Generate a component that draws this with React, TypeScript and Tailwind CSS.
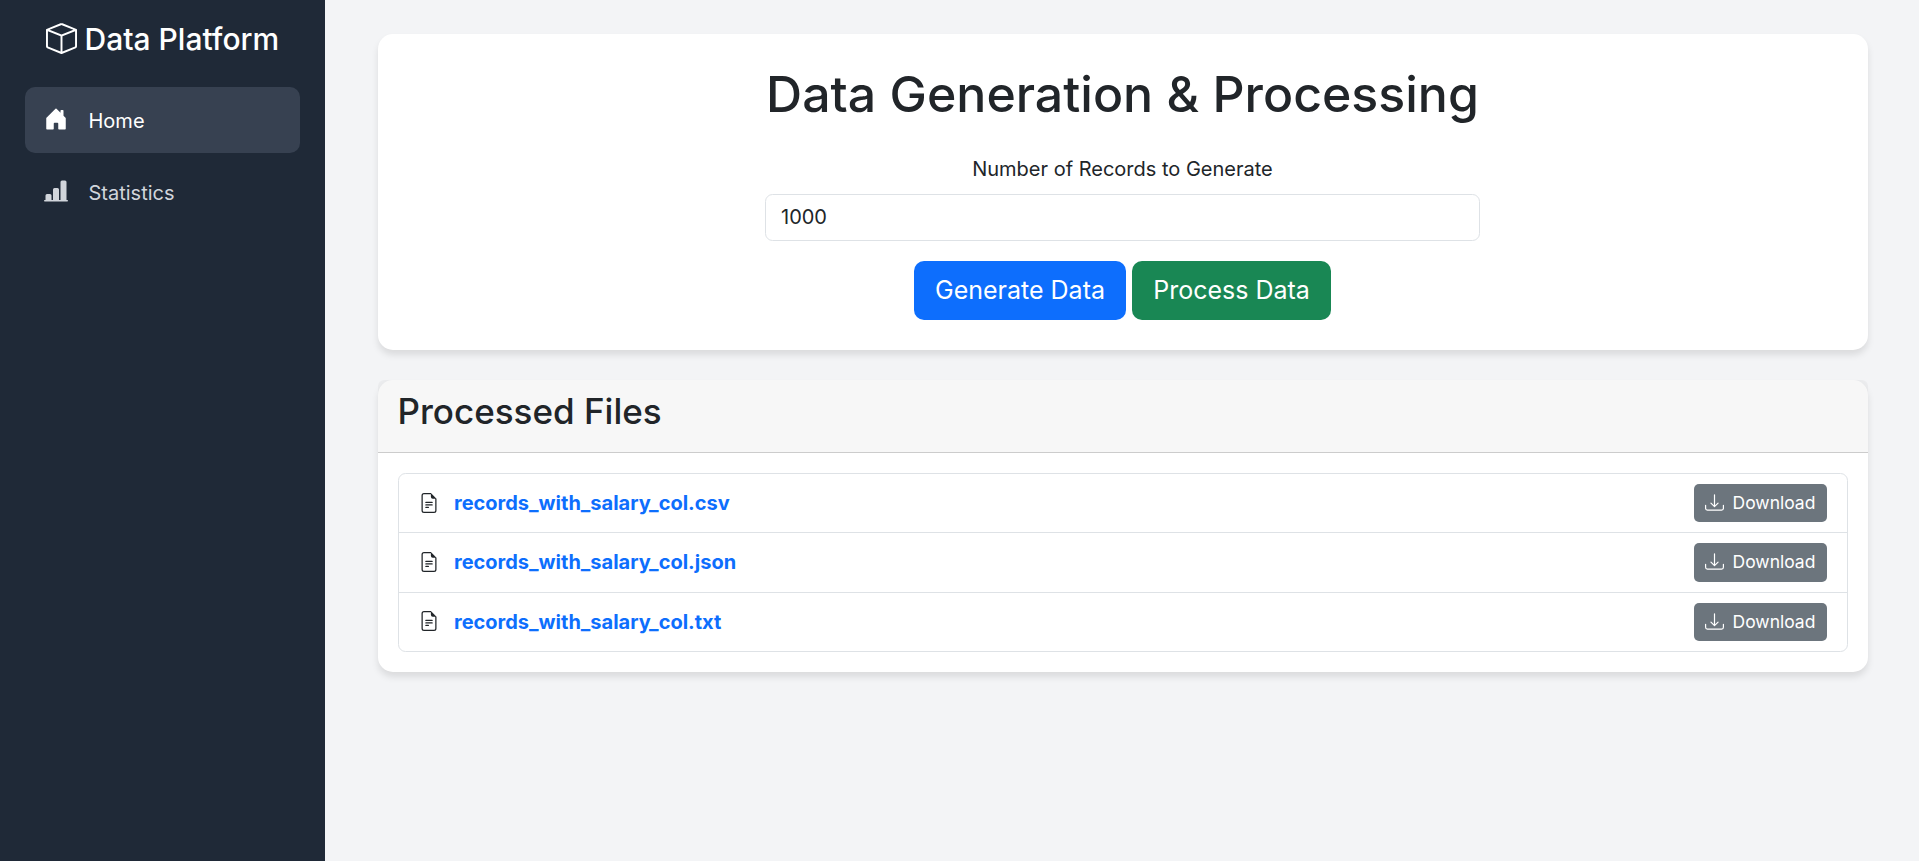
import { useState } from 'react';
import {
  BsBarChartLineFill,
  BsBox,
  BsDownload,
  BsFileEarmarkText,
  BsHouseDoorFill,
} from 'react-icons/bs';

const files = [
  { name: 'records_with_salary_col.csv', row: 'h-[59px]', icon: '', text: '', button: 'h-[38px]' },
  { name: 'records_with_salary_col.json', row: 'h-[60px]', icon: 'mb-[1px]', text: 'mb-[1px]', button: 'h-[39px] pb-[1px]' },
  { name: 'records_with_salary_col.txt', row: 'h-[58px]', icon: 'mb-[2px]', text: '', button: 'h-[38px]' },
];

function Sidebar() {
  return (
    <aside className="w-[325px] shrink-0 bg-[#1f2937] px-[25px] pt-[17px] text-white">
      <div className="flex h-[44px] items-center pl-[21px] text-[30px] leading-[44px] font-medium">
        <BsBox className="mr-[7.5px] mb-[1px] size-[31px]" />
        <span>Data Platform</span>
      </div>
      <nav className="mt-[26px] flex flex-col gap-[6px]">
        <a href="#" className="flex h-[66px] items-center rounded-[10px] bg-[#374151] px-[19px]">
          <BsHouseDoorFill className="mr-[20.5px] mb-[2px] size-[24px]" />
          <span className="pt-[2px] text-[20px] leading-[30px]">Home</span>
        </a>
        <a href="#" className="flex h-[66px] items-center rounded-[10px] px-[19px] text-[#d1d5db]">
          <BsBarChartLineFill className="mr-[20.5px] mb-[2px] size-[24px]" />
          <span className="pt-[2px] text-[20px] leading-[30px]">Statistics</span>
        </a>
      </nav>
    </aside>
  );
}

function GenerateCard() {
  const [count, setCount] = useState('1000');
  return (
    <section className="flex h-[316px] flex-col items-center rounded-[15px] bg-white pt-[30px] pr-[1px] shadow-[0_5px_7.5px_rgba(0,0,0,0.1)]">
      <h1 className="mb-[30px] text-[50px] leading-[60px] font-medium">Data Generation &amp; Processing</h1>
      <label htmlFor="records" className="mb-[10px] text-[20px] leading-[30px]">
        Number of Records to Generate
      </label>
      <input
        id="records"
        value={count}
        onChange={(e) => setCount(e.target.value)}
        className="mb-[20px] h-[47px] w-[715px] rounded-[7.5px] border border-[#dee2e6] px-[15px] pb-[1px] text-[20px] outline-none"
      />
      <div className="flex gap-[6px] text-[25px] leading-[37px] text-white">
        <button className="h-[59px] w-[212px] rounded-[10px] bg-[#0d6efd]">Generate Data</button>
        <button className="h-[59px] w-[199px] rounded-[10px] bg-[#198754]">Process Data</button>
      </div>
    </section>
  );
}

function FilesCard() {
  return (
    <section className="mt-[30px] rounded-[15px] bg-white pb-[20px] shadow-[0_5px_7.5px_rgba(0,0,0,0.1)]">
      <header className="h-[73px] rounded-t-[6px] border-b border-black/[0.176] bg-black/[0.03] px-[19.5px] pt-[10px]">
        <h3 className="text-[35px] leading-[42px] font-medium">Processed Files</h3>
      </header>
      <ul className="mx-[20px] mt-[20px] divide-y divide-[#dee2e6] rounded-[7.5px] border border-[#dee2e6]">
        {files.map((file) => (
          <li key={file.name} className={`flex items-center justify-between px-[20px] ${file.row}`}>
            <div className="flex items-center">
              <BsFileEarmarkText className={`mr-[15px] size-[20px] ${file.icon}`} />
              <a href="#" className={`text-[20px] leading-[30px] font-bold text-[#0d6efd] ${file.text}`}>
                {file.name}
              </a>
            </div>
            <button
              className={`flex w-[133px] items-center rounded-[5px] bg-[#6c757d] pl-[11px] text-[17.5px] leading-[26px] text-white ${file.button}`}
            >
              <BsDownload className="mr-[8.5px] mb-[1px] size-[19px]" />
              Download
            </button>
          </li>
        ))}
      </ul>
    </section>
  );
}

export default function App() {
  return (
    <div className="flex h-[861px] w-full overflow-hidden bg-[#f3f4f6] font-['Inter',sans-serif] text-[#212529]">
      <Sidebar />
      <main className="flex-1 pt-[34px] pr-[51px] pl-[53px]">
        <GenerateCard />
        <FilesCard />
      </main>
    </div>
  );
}
